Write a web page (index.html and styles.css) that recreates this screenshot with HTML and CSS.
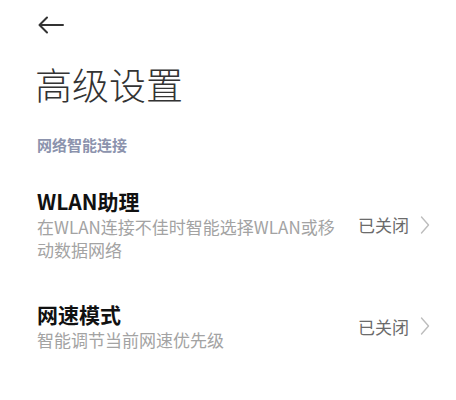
FILE: index.html
```html
<!DOCTYPE html>
<html lang="zh-CN">
<head>
<meta charset="UTF-8">
<meta name="viewport" content="width=device-width, initial-scale=1.0">
<title>高级设置</title>
<link rel="stylesheet" href="styles.css">
</head>
<body>

<div class="page">
  <div class="topbar">
    <svg class="back" width="26" height="18" viewBox="0 0 26 18" xmlns="http://www.w3.org/2000/svg">
      <path d="M25 9H2M9 1.5L1.5 9L9 16.5" fill="none" stroke="#333" stroke-width="2" stroke-linecap="round" stroke-linejoin="round"/>
    </svg>
  </div>

  <h1 class="page-title">高级设置</h1>

  <div class="section-label">网络智能连接</div>

  <div class="item">
    <div class="item-text">
      <div class="item-title">WLAN助理</div>
      <div class="item-desc">在WLAN连接不佳时智能选择WLAN或移动数据网络</div>
    </div>
    <div class="item-value">已关闭</div>
    <svg class="chevron" width="10" height="18" viewBox="0 0 10 18" xmlns="http://www.w3.org/2000/svg">
      <path d="M1.5 1L8.5 9L1.5 17" fill="none" stroke="#bdbdbd" stroke-width="1.4" stroke-linecap="round" stroke-linejoin="round"/>
    </svg>
  </div>

  <div class="item">
    <div class="item-text">
      <div class="item-title">网速模式</div>
      <div class="item-desc">智能调节当前网速优先级</div>
    </div>
    <div class="item-value">已关闭</div>
    <svg class="chevron" width="10" height="18" viewBox="0 0 10 18" xmlns="http://www.w3.org/2000/svg">
      <path d="M1.5 1L8.5 9L1.5 17" fill="none" stroke="#bdbdbd" stroke-width="1.4" stroke-linecap="round" stroke-linejoin="round"/>
    </svg>
  </div>
</div>

</body>
</html>
```

FILE: styles.css
```css
body {
  margin: 0;
  padding: 0;
  background-color: #fff;
  font-family: "Noto Sans CJK SC", "Noto Sans", sans-serif;
  color: #333;
}
.page {
  width: 456px;
  height: 400px;
  overflow: hidden;
}
.topbar {
  padding: 16px 0 0 38px;
  height: 34px;
  box-sizing: border-box;
}
.back {
  display: block;
}
.page-title {
  margin: 26px 0 0 35px;
  font-size: 37px;
  line-height: 48px;
  font-weight: 300;
  color: #333;
}
.section-label {
  margin: 27px 0 0 37px;
  font-size: 15px;
  line-height: 20px;
  font-weight: 700;
  color: #8c93ad;
}
.item {
  display: flex;
  align-items: center;
  padding: 0 26px 0 37px;
}
.item + .item {
  margin-top: 40px;
}
.section-label + .item {
  margin-top: 33px;
}
.item-text {
  flex: 1;
  min-width: 0;
  padding-right: 8px;
}
.item-title {
  font-size: 21px;
  line-height: 26px;
  font-weight: 700;
  color: #111;
}
.item-desc {
  margin-top: 1px;
  font-size: 17px;
  line-height: 23px;
  color: #a3a3a3;
}
.item-value {
  font-size: 17px;
  color: #6b6b6b;
  white-space: nowrap;
  margin-right: 11px;
}
.chevron {
  display: block;
  flex-shrink: 0;
}
```
